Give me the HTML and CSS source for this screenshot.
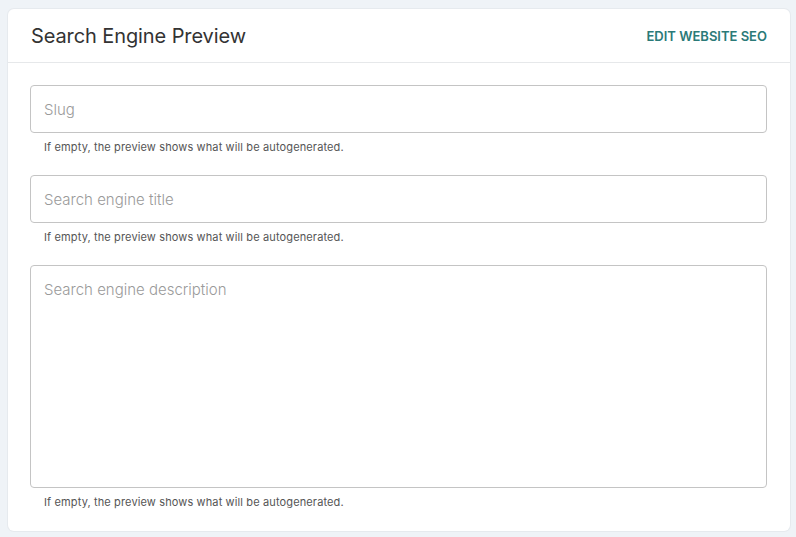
FILE: index.html
```html
<!DOCTYPE html>
<html lang="en">
<head>
<meta charset="utf-8">
<title>Search Engine Preview</title>
<link rel="stylesheet" href="styles.css">
</head>
<body>
  <section class="card">
    <header class="card-header">
      <h2 class="card-title">Search Engine Preview</h2>
      <a class="card-link" href="#">EDIT WEBSITE SEO</a>
    </header>
    <div class="card-body">
      <div class="field">
        <input class="input" type="text" placeholder="Slug">
        <p class="help">If empty, the preview shows what will be autogenerated.</p>
      </div>
      <div class="field">
        <input class="input" type="text" placeholder="Search engine title">
        <p class="help">If empty, the preview shows what will be autogenerated.</p>
      </div>
      <div class="field">
        <textarea class="input textarea" placeholder="Search engine description"></textarea>
        <p class="help">If empty, the preview shows what will be autogenerated.</p>
      </div>
    </div>
  </section>
</body>
</html>
```

FILE: styles.css
```css
* { box-sizing: border-box; }
html, body { margin: 0; }
body {
  background: #eff3f7;
  padding: 9px 6px 6px 8px;
  font-family: Inter, "Noto Sans", sans-serif;
  color: #333;
}
.card {
  background: #fff;
  border-radius: 6px;
  box-shadow: 0 0 0 1px #e6eaee;
}
.card-header {
  height: 54px;
  display: flex;
  align-items: center;
  justify-content: space-between;
  padding: 0 23px 0 23px;
  border-bottom: 1px solid #e6e8ea;
}
.card-title {
  margin: 0;
  font-size: 20px;
  font-weight: 400;
  letter-spacing: -0.1px;
  color: #333;
}
.card-link {
  font-size: 13px;
  font-weight: 600;
  color: #2b7a78;
  text-decoration: none;
}
.card-body {
  padding: 22px 23px 21px 22px;
}
.field + .field { margin-top: 20px; }
.input {
  display: block;
  width: 100%;
  height: 48px;
  border: 1px solid #c4c4c4;
  border-radius: 4px;
  padding: 0 13px;
  font-family: inherit;
  font-size: 15px;
  font-weight: 300;
  color: #333;
  background: #fff;
  outline: none;
}
.input::placeholder { color: #9a9a9a; }
.textarea {
  height: 223px;
  padding: 14px 13px;
  line-height: 20px;
  resize: none;
}
.help {
  margin: 6px 0 0;
  padding-left: 14px;
  font-size: 11px;
  line-height: 16px;
  letter-spacing: 0.13px;
  color: #555;
}
```
